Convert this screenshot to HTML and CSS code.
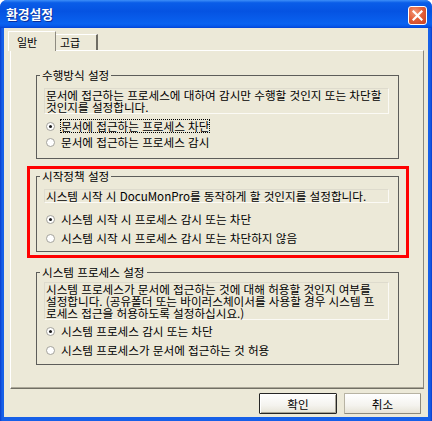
FILE: index.html
```html
<!DOCTYPE html>
<html lang="ko">
<head>
<meta charset="utf-8">
<title>환경설정</title>
<link rel="stylesheet" href="styles.css">
</head>
<body>
<div class="window">
  <div class="titlebar">
    <span class="title">환경설정</span>
    <span class="close">
      <svg width="11" height="11" viewBox="0 0 11 11"><path d="M1.5 1.5 L9.5 9.5 M9.5 1.5 L1.5 9.5" stroke="#fff" stroke-width="2.2" stroke-linecap="square"/></svg>
    </span>
  </div>
  <div class="frame">
    <div class="client">
      <div class="tabs">
        <div class="tab tab-first active">일반</div>
        <div class="tab tab-second">고급</div>
      </div>
      <div class="panel">
        <fieldset class="group g1">
          <legend>수행방식 설정</legend>
          <div class="desc">문서에 접근하는 프로세스에 대하여 감시만 수행할 것인지 또는 차단할<br>것인지를 설정합니다.</div>
          <div class="opts">
            <div class="opt"><span class="radio checked"></span><span class="label focus">문서에 접근하는 프로세스 차단</span></div>
            <div class="opt"><span class="radio"></span><span class="label">문서에 접근하는 프로세스 감시</span></div>
          </div>
        </fieldset>
        <div class="highlight">
          <fieldset class="group g2">
            <legend>시작정책 설정</legend>
            <div class="desc">시스템 시작 시 DocuMonPro를 동작하게 할 것인지를 설정합니다.</div>
            <div class="opts">
              <div class="opt"><span class="radio checked"></span><span class="label">시스템 시작 시 프로세스 감시 또는 차단</span></div>
              <div class="opt"><span class="radio"></span><span class="label">시스템 시작 시 프로세스 감시 또는 차단하지 않음</span></div>
            </div>
          </fieldset>
        </div>
        <fieldset class="group g3">
          <legend>시스템 프로세스 설정</legend>
          <div class="desc">시스템 프로세스가 문서에 접근하는 것에 대해 허용할 것인지 여부를<br>설정합니다. (공유폴더 또는 바이러스체이서를 사용할 경우 시스템 프<br>로세스 접근을 허용하도록 설정하십시요.)</div>
          <div class="opts">
            <div class="opt"><span class="radio checked"></span><span class="label">시스템 프로세스 감시 또는 차단</span></div>
            <div class="opt"><span class="radio"></span><span class="label">시스템 프로세스가 문서에 접근하는 것 허용</span></div>
          </div>
        </fieldset>
      </div>
      <div class="buttons">
        <button class="btn btn-default" type="button">확인</button>
        <button class="btn" type="button">취소</button>
      </div>
    </div>
  </div>
</div>
</body>
</html>
```
FILE: styles.css
```css
* { box-sizing: border-box; }
html, body { margin: 0; padding: 0; background: #fff; }
body {
  font-family: "Noto Sans CJK KR", "Noto Sans", sans-serif;
  font-size: 11.6px;
  color: #000;
}
.window {
  width: 432px;
  height: 421px;
  display: flex;
  flex-direction: column;
  border-radius: 7px 7px 0 0;
  overflow: hidden;
  background: #0b47d8;
}
.titlebar {
  height: 28px;
  flex: none;
  display: flex;
  align-items: center;
  justify-content: space-between;
  padding: 0 5px 0 6px;
  background: linear-gradient(180deg, #3d8ef8 0%, #0a5de8 10%, #0553e2 40%, #0a62f0 85%, #0658ea 93%, #0343d4 100%);
}
.title {
  color: #fff;
  font-weight: bold;
  font-size: 12.8px;
  line-height: 14px;
  text-shadow: 1px 1px #0b2f9a;
}
.close {
  width: 19px;
  height: 19px;
  border: 1px solid #fff;
  border-radius: 3px;
  background: radial-gradient(circle at 35% 30%, #f29878 0%, #e3603a 45%, #c84020 100%);
  display: flex;
  align-items: center;
  justify-content: center;
  margin-top: 3px;
}
.frame {
  flex: 1;
  padding: 0 4px 4px;
  background: linear-gradient(90deg, #0a3ccc 0, #1660e8 2px, #1660e8 calc(100% - 2px), #0a3ccc 100%);
}
.client {
  height: 100%;
  background: #ece9d8;
  padding: 3px 0 0 4px;
  display: flex;
  flex-direction: column;
}
.tabs {
  display: flex;
  align-items: flex-end;
  height: 19px;
  position: relative;
  z-index: 1;
}
.tab {
  height: 16px;
  line-height: 12px;
  border-top: 1px solid #fff;
  padding-top: 1px;
  background: #ece9d8;
  font-size: 11px;
}
.tab-first {
  width: 48px;
  border-left: 1px solid #fff;
  border-right: 1px solid #8e8b80;
  padding-left: 8px;
}
.tab-second {
  width: 42px;
  padding-left: 4px;
  border-right: 2px solid #6f6d64;
}
.tab.active {
  height: 20px;
  margin-bottom: -1px;
  padding-top: 4px;
}
.panel {
  margin-left: 2px;
  width: 414px;
  height: 339px;
  flex: none;
  border-top: 1px solid #fff;
  border-left: 1px solid #fff;
  border-right: 1px solid #8b887d;
  border-bottom: 1px solid #716f64;
  box-shadow: inset 0 -1px #aca899;
  padding: 18px 24px 0 25px;
}
.group {
  margin: 0;
  border: 1px solid #5d5d5a;
  min-width: 0;
}
.group legend {
  padding: 0 2px;
  margin-left: -4px;
  line-height: 12px;
  color: #000;
}
.desc {
  border: 1px solid #fbfaf5;
  border-top-color: #dedbcd;
  border-left-color: #dedbcd;
  padding-left: 1px;
  line-height: 12px;
  white-space: nowrap;
  width: 345px;
}
.opts {
  display: flex;
  flex-direction: column;
}
.opt {
  height: 16px;
  display: flex;
  align-items: center;
  margin-left: 2px;
  white-space: nowrap;
}
.radio {
  width: 9px;
  height: 9px;
  border-radius: 50%;
  border: 1px solid #a3a29b;
  background: #fff;
  margin-right: 6px;
  display: flex;
  align-items: center;
  justify-content: center;
  flex: none;
}
.radio.checked::after {
  content: "";
  width: 3px;
  height: 3px;
  border-radius: 50%;
  background: #1c1c1c;
}
.label { line-height: 12px; }
.label.focus {
  outline: 1px dotted #000;
  outline-offset: 0;
}
.g1 { padding: 7px 9px 8px 7px; }
.g1 .opts { margin-top: 4px; }
.highlight {
  margin: 7px -10px 0 -9px;
  border: 3px solid #ff0000;
  padding: 1px 7px 3px 6px;
}
.g2 { padding: 7px 9px 5px 7px; }
.g2 .opts { margin-top: 8px; gap: 3px; }
.g3 { margin-top: 8px; padding: 4px 9px 6px 7px; }
.g3 .opts { margin-top: 3px; gap: 3px; }
.buttons {
  display: flex;
  justify-content: flex-end;
  gap: 7px;
  padding-right: 7px;
  margin-top: 4px;
}
.btn {
  height: 21px;
  width: 77px;
  font-family: inherit;
  font-size: 11.6px;
  line-height: 12px;
  padding: 0;
  color: #000;
  background: linear-gradient(180deg, #ffffff 0%, #f4f3ee 60%, #e6e3d6 100%);
  border: 1px solid #b7b3a3;
  border-right-color: #8c897c;
  border-bottom-color: #8c897c;
  border-radius: 1px;
}
.btn-default {
  width: 78px;
  border: 1px solid #262626;
  box-shadow: inset 1px 1px #fff, inset -1px -1px #a7a496;
}
```
